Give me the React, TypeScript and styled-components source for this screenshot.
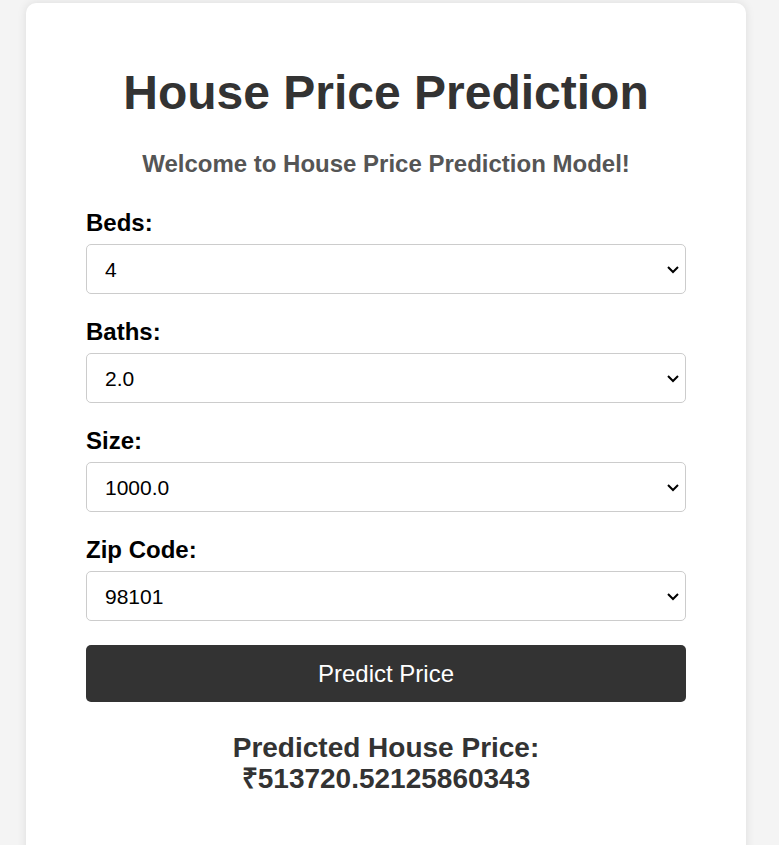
import React, { useState } from 'react';
import styled, { createGlobalStyle } from 'styled-components';

const GlobalStyle = createGlobalStyle`
  html, body {
    margin: 0;
    padding: 0;
    background: #f4f4f4;
    font-family: 'Liberation Sans', Arial, sans-serif;
  }
`;

const Page = styled.div`
  padding: 3px 33px 0 26px;
  height: 845px;
  overflow: hidden;
  box-sizing: border-box;
`;

const Card = styled.div`
  background: #ffffff;
  border-radius: 10px;
  box-shadow: 0 0 10px rgba(0, 0, 0, 0.1);
  padding: 40px 60px 48px;
  min-height: 900px;
  box-sizing: border-box;
`;

const Title = styled.h1`
  margin: 22px 0 0;
  text-align: center;
  font-size: 48px;
  line-height: 56px;
  color: #333333;
`;

const Subtitle = styled.h2`
  margin: 29px 0 31px;
  text-align: center;
  font-size: 24px;
  line-height: 28px;
  color: #555555;
`;

const Form = styled.form`
  display: flex;
  flex-direction: column;
`;

const Field = styled.div`
  display: flex;
  flex-direction: column;
  margin-bottom: 24px;
`;

const Label = styled.label`
  font-size: 24px;
  font-weight: bold;
  color: #000000;
  line-height: 28px;
  margin-bottom: 7px;
`;

const SelectWrap = styled.div`
  position: relative;
`;

const Select = styled.select`
  width: 100%;
  height: 50px;
  appearance: none;
  border: 1px solid #cccccc;
  border-radius: 5px;
  background: #ffffff;
  padding: 0 40px 0 18px;
  font-family: 'Liberation Sans', Arial, sans-serif;
  font-size: 21px;
  color: #000000;
  box-sizing: border-box;
  outline: none;
`;

const Chevron = styled.svg`
  position: absolute;
  right: 5px;
  top: 50%;
  transform: translateY(-50%);
  pointer-events: none;
`;

const Button = styled.button`
  height: 57px;
  border: none;
  border-radius: 5px;
  background: #333333;
  color: #ffffff;
  font-family: 'Liberation Sans', Arial, sans-serif;
  font-size: 24px;
  cursor: pointer;
`;

const Result = styled.h3`
  margin: 30px 0 0;
  text-align: center;
  font-size: 28px;
  line-height: 31px;
  color: #333333;
`;

type Option = { name: string; label: string; value: string; options: string[] };

const fields: Option[] = [
  { name: 'beds', label: 'Beds:', value: '4', options: ['1', '2', '3', '4', '5', '6'] },
  { name: 'baths', label: 'Baths:', value: '2.0', options: ['1.0', '1.5', '2.0', '2.5', '3.0'] },
  { name: 'size', label: 'Size:', value: '1000.0', options: ['500.0', '750.0', '1000.0', '1500.0', '2000.0'] },
  { name: 'zip', label: 'Zip Code:', value: '98101', options: ['98101', '98102', '98103', '98104'] },
];

const App: React.FC = () => {
  const [values, setValues] = useState<Record<string, string>>(
    Object.fromEntries(fields.map((f) => [f.name, f.value]))
  );

  return (
    <>
      <GlobalStyle />
      <Page>
        <Card>
          <Title>House Price Prediction</Title>
          <Subtitle>Welcome to House Price Prediction Model!</Subtitle>
          <Form onSubmit={(e) => e.preventDefault()}>
            {fields.map((f) => (
              <Field key={f.name}>
                <Label htmlFor={f.name}>{f.label}</Label>
                <SelectWrap>
                  <Select
                    id={f.name}
                    value={values[f.name]}
                    onChange={(e) => setValues({ ...values, [f.name]: e.target.value })}
                  >
                    {f.options.map((o) => (
                      <option key={o} value={o}>
                        {o}
                      </option>
                    ))}
                  </Select>
                  <Chevron width="16" height="16" viewBox="0 0 16 16">
                    <path d="M3 6l5 5 5-5" fill="none" stroke="#000" strokeWidth="2" />
                  </Chevron>
                </SelectWrap>
              </Field>
            ))}
            <Button type="submit">Predict Price</Button>
          </Form>
          <Result>
            Predicted House Price:
            <br />
            ₹513720.52125860343
          </Result>
        </Card>
      </Page>
    </>
  );
};

export default App;
